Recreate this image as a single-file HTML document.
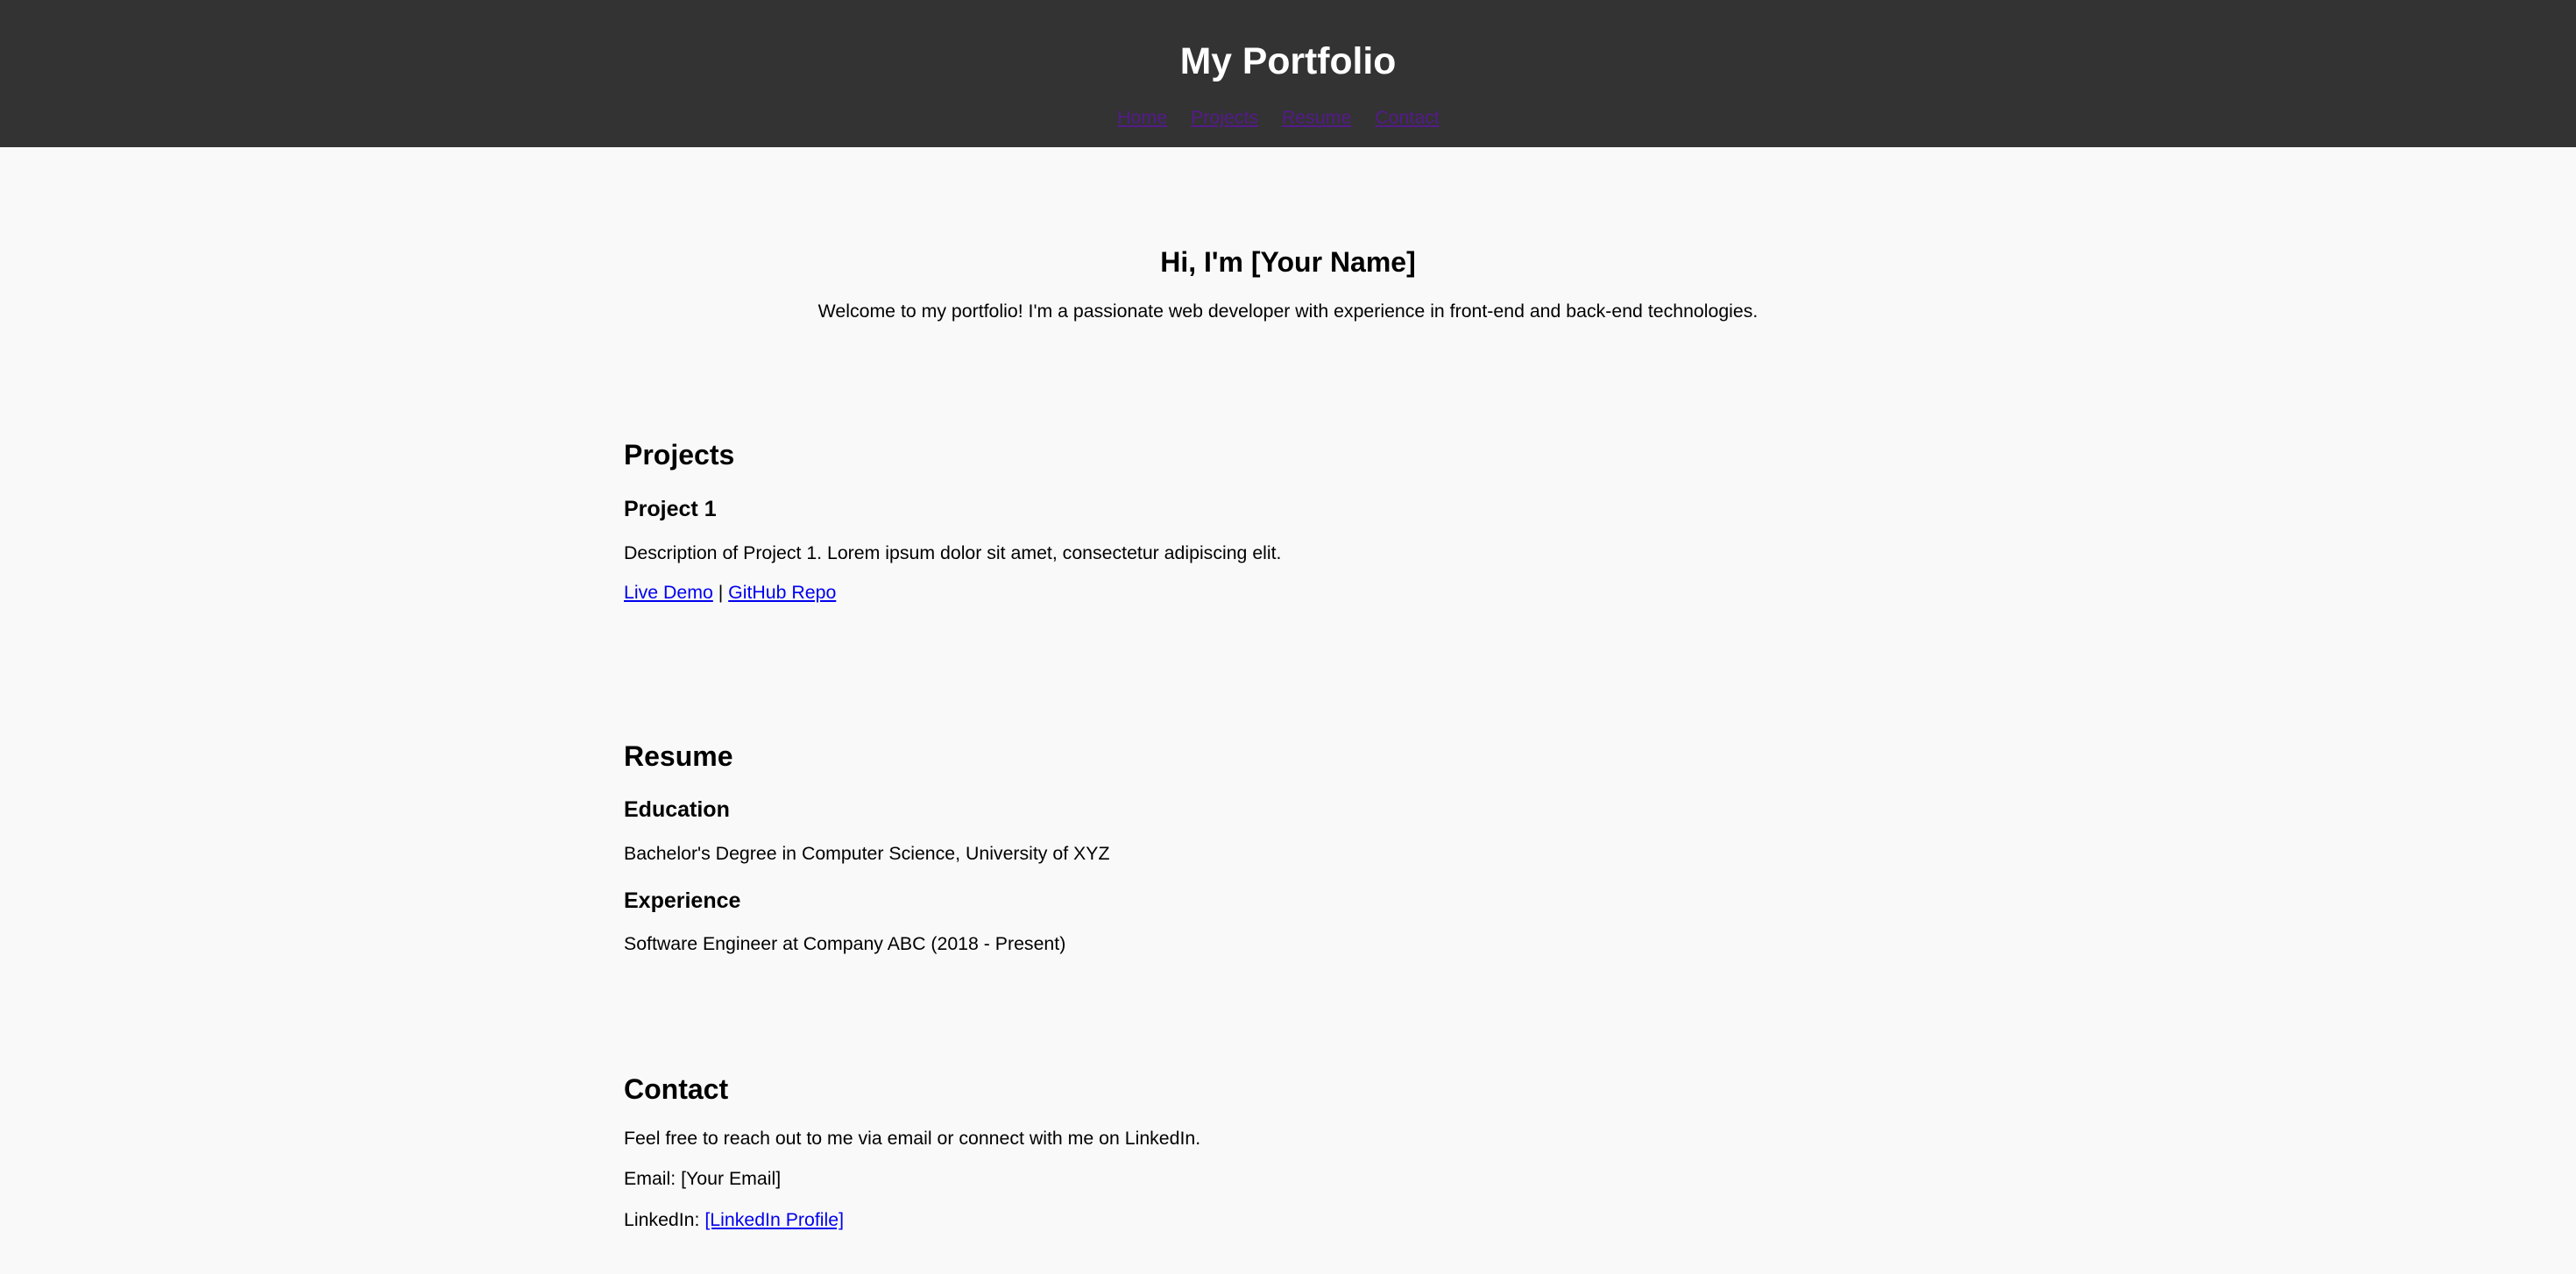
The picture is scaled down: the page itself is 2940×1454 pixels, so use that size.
<!DOCTYPE html>
<html><head><meta charset="utf-8"><style>
html,body{margin:0;padding:0;}
body{width:2940px;height:1454px;background:#f9f9f9;font-family:"Liberation Sans",Arial,sans-serif;color:#000;position:relative;overflow:hidden;}
header{position:absolute;left:0;top:0;width:2940px;height:168px;background:#333;}
.a{position:absolute;line-height:1.2;white-space:nowrap;margin:0;}
.c{left:0;width:2940px;text-align:center;}
h1.a{font-size:42.7px;font-weight:bold;color:#fff;}
nav{position:absolute;left:0;width:2918px;padding-right:22px;top:122px;display:flex;justify-content:center;gap:27px;font-size:21.3px;line-height:1.2;}
nav a{color:#551a8b;}
h2.a{font-size:32px;font-weight:bold;}
h3.a{font-size:25px;font-weight:bold;}
p.a{font-size:21.3px;}
.l{left:712px;}
a{color:#0000ee;}
</style></head><body>
<header>
<h1 class="a c" style="top:45px">My Portfolio</h1>
<nav><a href="#">Home</a><a href="#">Projects</a><a href="#">Resume</a><a href="#">Contact</a></nav>
</header>
<h2 class="a c" style="top:280px">Hi, I'm [Your Name]</h2>
<p class="a c" style="top:343px">Welcome to my portfolio! I'm a passionate web developer with experience in front-end and back-end technologies.</p>

<h2 class="a l" style="top:500px">Projects</h2>
<h3 class="a l" style="top:566px">Project 1</h3>
<p class="a l" style="top:619px">Description of Project 1. Lorem ipsum dolor sit amet, consectetur adipiscing elit.</p>
<p class="a l" style="top:664px"><a href="#">Live Demo</a> | <a href="#">GitHub Repo</a></p>

<h2 class="a l" style="top:844px">Resume</h2>
<h3 class="a l" style="top:909px">Education</h3>
<p class="a l" style="top:962px">Bachelor's Degree in Computer Science, University of XYZ</p>
<h3 class="a l" style="top:1013px">Experience</h3>
<p class="a l" style="top:1065px">Software Engineer at Company ABC (2018 - Present)</p>

<h2 class="a l" style="top:1224px">Contact</h2>
<p class="a l" style="top:1287px">Feel free to reach out to me via email or connect with me on LinkedIn.</p>
<p class="a l" style="top:1333px">Email: [Your Email]</p>
<p class="a l" style="top:1380px">LinkedIn: <a href="#">[LinkedIn Profile]</a></p>
</body></html>
